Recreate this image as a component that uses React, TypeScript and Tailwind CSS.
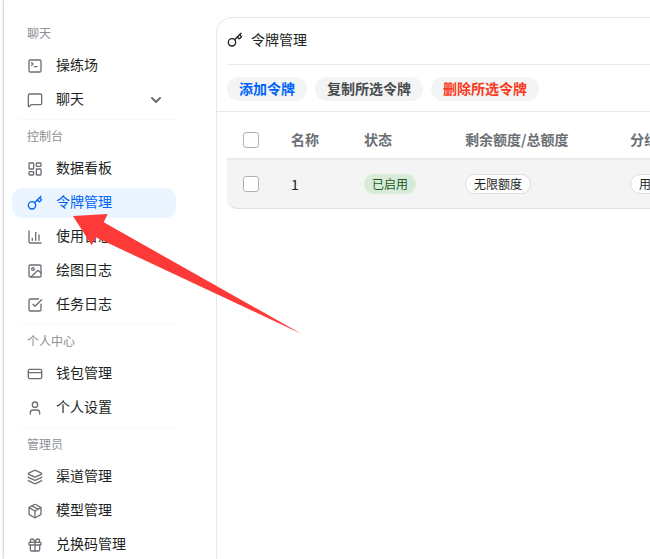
import type { ReactNode } from 'react'
import {
  ChartColumn,
  ChevronDown,
  CreditCard,
  Gift,
  Image,
  Key,
  Layers,
  LayoutDashboard,
  MessageSquare,
  Package,
  SquareCheckBig,
  SquareTerminal,
  User,
  type LucideIcon,
} from 'lucide-react'

type NavItem = {
  label: string
  icon: LucideIcon
  active?: boolean
  expandable?: boolean
}

const sections: { title: string; items: NavItem[] }[] = [
  {
    title: '聊天',
    items: [
      { label: '操练场', icon: SquareTerminal },
      { label: '聊天', icon: MessageSquare, expandable: true },
    ],
  },
  {
    title: '控制台',
    items: [
      { label: '数据看板', icon: LayoutDashboard },
      { label: '令牌管理', icon: Key, active: true },
      { label: '使用日志', icon: ChartColumn },
      { label: '绘图日志', icon: Image },
      { label: '任务日志', icon: SquareCheckBig },
    ],
  },
  {
    title: '个人中心',
    items: [
      { label: '钱包管理', icon: CreditCard },
      { label: '个人设置', icon: User },
    ],
  },
  {
    title: '管理员',
    items: [
      { label: '渠道管理', icon: Layers },
      { label: '模型管理', icon: Package },
      { label: '兑换码管理', icon: Gift },
    ],
  },
]

function NavRow({ item }: { item: NavItem }) {
  const Icon = item.icon
  const rowClass = 'mb-1 flex h-[30px] w-full items-center gap-[13px] rounded-[10px] pr-3 pl-[15px] text-left'

  if (item.expandable) {
    return (
      <button type="button" className={`${rowClass} text-[#1c1f23]`}>
        <Icon size={16} className="text-[#6b7075]" />
        <span className="flex-1 pb-1">{item.label}</span>
        <ChevronDown size={16} strokeWidth={3} className="text-[#6b7075]" />
      </button>
    )
  }

  return (
    <a
      href="#"
      aria-current={item.active ? 'page' : undefined}
      className={`${rowClass} ${item.active ? 'bg-[#eaf5ff] text-[#0064fa]' : 'text-[#1c1f23]'}`}
    >
      <Icon size={16} className={item.active ? '' : 'text-[#6b7075]'} />
      <span className="pb-1">{item.label}</span>
    </a>
  )
}

function Sidebar() {
  return (
    <nav className="w-[172px] shrink-0 pt-[17px] pl-2">
      {sections.map((section, i) => (
        <section key={section.title}>
          {i > 0 && <hr className="ml-2 border-[#f7f7f7]" />}
          <h2 className="pt-1.5 pb-2 pl-[15px] text-xs leading-5 text-[#8d9094]">{section.title}</h2>
          {section.items.map((item) => (
            <NavRow key={item.label} item={item} />
          ))}
        </section>
      ))}
    </nav>
  )
}

function ActionButton({ className, children }: { className: string; children: ReactNode }) {
  return (
    <button type="button" className={`h-6 shrink-0 rounded-full bg-[#f3f5f5] px-3 pb-0.5 leading-5 font-bold ${className}`}>
      {children}
    </button>
  )
}

function Checkbox({ label }: { label: string }) {
  return (
    <input
      type="checkbox"
      aria-label={label}
      className="block size-4 appearance-none rounded-[3px] border border-[#b0b2b4] bg-white checked:bg-[#0064fa]"
    />
  )
}

function TokenTable() {
  return (
    <table className="w-full min-w-[530px] table-fixed border-separate border-spacing-0 text-left">
      <colgroup>
        <col className="w-12" />
        <col className="w-[73px]" />
        <col className="w-[101px]" />
        <col className="w-[165px]" />
        <col />
      </colgroup>
      <thead>
        <tr className="h-[38px] text-[#6b7075] *:border-b-2 *:border-[#ebebeb] *:px-4 *:font-bold">
          <th>
            <Checkbox label="全选" />
          </th>
          <th className="pb-0.5">名称</th>
          <th className="pb-0.5">状态</th>
          <th className="pb-0.5">剩余额度/总额度</th>
          <th className="pb-0.5">分组</th>
        </tr>
      </thead>
      <tbody>
        <tr className="h-[49px] text-[#1c1f23] *:border-b *:border-[#e0e0e0] *:bg-[#f4f4f4] *:px-4">
          <td className="rounded-bl-[10px]">
            <Checkbox label="选择 1" />
          </td>
          <td>1</td>
          <td>
            <span className="flex h-5 w-fit items-center rounded-full bg-[#d8ebd9] px-2 text-xs text-[#1b5924]">已启用</span>
          </td>
          <td>
            <span className="flex h-5 w-fit items-center rounded-full border border-[#dcdde0] bg-white px-2 text-xs">
              无限额度
            </span>
          </td>
          <td>
            <span className="flex h-5 w-fit items-center rounded-full border border-[#dcdde0] bg-white px-2 text-xs whitespace-nowrap">
              用户分组
            </span>
          </td>
        </tr>
      </tbody>
    </table>
  )
}

export default function App() {
  return (
    <div className="relative h-screen overflow-hidden bg-white pl-1 font-['Noto_Sans_CJK_SC',sans-serif] text-sm leading-5">
      <div className="flex h-full overflow-hidden shadow-[-1px_0_2px_rgba(0,0,0,0.2)]">
        <Sidebar />

        <main className="mt-[17px] ml-10 min-w-0 flex-1 overflow-hidden rounded-tl-2xl border-t border-l border-[#e6e7e8]">
          <div className="pl-[10px]">
            <header className="flex h-[47px] items-center gap-2 border-b border-[#ebebeb] pb-0.5 text-[#1c1f23]">
              <Key size={16} />
              <h1 className="pb-0.5">令牌管理</h1>
            </header>
          </div>
          <div className="flex gap-2 border-b border-[#e6e7e8] pt-3 pb-[10px] pl-[10px]">
            <ActionButton className="text-[#0064fa]">添加令牌</ActionButton>
            <ActionButton className="text-[#494c4f]">复制所选令牌</ActionButton>
            <ActionButton className="text-[#f93920]">删除所选令牌</ActionButton>
          </div>
          <div className="pt-[10px] pl-[10px]">
            <TokenTable />
          </div>
        </main>
      </div>

      {/* Pointer to the active menu entry */}
      <svg className="pointer-events-none absolute top-[213px] left-[72px]" width="232" height="122" viewBox="72 213 232 122">
        <path d="M73 216 107.7 214 103.7 222.3 301.7 334 95.7 237.3 91.7 245.3Z" fill="#fd3a38" />
      </svg>
    </div>
  )
}
